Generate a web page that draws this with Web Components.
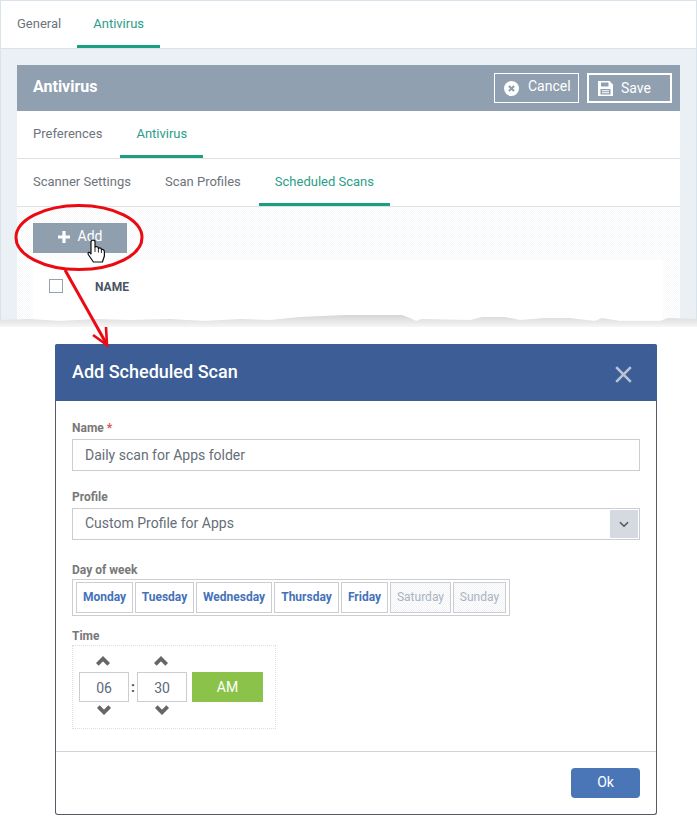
<!DOCTYPE html>
<html>
<head>
<meta charset="utf-8">
<title>Add Scheduled Scan</title>
<style>
  html, body { margin: 0; background: #fff; }
  body { position: relative; width: 697px; height: 817px; overflow: hidden; font-family: Roboto, "Liberation Sans", sans-serif; }
</style>
</head>
<body>
  <app-frame>
    <tab-bar>
      <tab-item>General</tab-item>
      <tab-item active>Antivirus</tab-item>
    </tab-bar>
    <settings-panel title="Antivirus">
      <tab-bar slot="tabs" gap="2">
        <tab-item>Preferences</tab-item>
        <tab-item active>Antivirus</tab-item>
      </tab-bar>
      <tab-bar slot="tabs" gap="2">
        <tab-item>Scanner Settings</tab-item>
        <tab-item>Scan Profiles</tab-item>
        <tab-item active>Scheduled Scans</tab-item>
      </tab-bar>
      <scan-table></scan-table>
    </settings-panel>
  </app-frame>
  <torn-edge></torn-edge>
  <modal-dialog title="Add Scheduled Scan">
    <form-field label="Name" required>
      <text-box value="Daily scan for Apps folder"></text-box>
    </form-field>
    <form-field label="Profile" style="margin-top:18px">
      <text-box value="Custom Profile for Apps" select></text-box>
    </form-field>
    <form-field label="Day of week" gap="3" style="margin-top:22px">
      <day-picker>
        <day-button style="width:57px">Monday</day-button>
        <day-button style="width:59px">Tuesday</day-button>
        <day-button style="width:76px">Wednesday</day-button>
        <day-button style="width:65px">Thursday</day-button>
        <day-button style="width:47px">Friday</day-button>
        <day-button style="width:61px" disabled>Saturday</day-button>
        <day-button style="width:53px" disabled>Sunday</day-button>
      </day-picker>
    </form-field>
    <form-field label="Time" gap="3" style="margin-top:12px">
      <time-picker hours="06" minutes="30" period="AM"></time-picker>
    </form-field>
  </modal-dialog>
  <call-out></call-out>

<script>
  var CANCEL_ICON = '<svg width="15" height="15" viewBox="0 0 15 15"><circle cx="7.5" cy="7.5" r="7.5" fill="#fff"/><path d="M4.9 4.9l5.2 5.2M10.1 4.9l-5.2 5.2" stroke="#90a0b0" stroke-width="2.1"/></svg>';
  var SAVE_ICON = '<svg width="15" height="15" viewBox="0 0 15 15"><path fill="#fff" fill-rule="evenodd" d="M0 0h11.5L15 3.5V15H0zM3 1.5V5.5H10.5V1.5zM2.5 8V13.5H12.5V8zM4 9.3H11V10.3H4zM4 11.2H11V12.2H4z"/></svg>';
  var CHEVRON_UP = '<svg width="14" height="10" viewBox="0 0 14 10"><path d="M1.3 8.4L7 2.7 12.7 8.4" fill="none" stroke="#666" stroke-width="3.8"/></svg>';
  var CHEVRON_DOWN = '<svg width="14" height="10" viewBox="0 0 14 10"><path d="M1.3 1.6L7 7.3 12.7 1.6" fill="none" stroke="#666" stroke-width="3.8"/></svg>';

  class AppFrame extends HTMLElement {
    constructor() {
      super();
      this.attachShadow({ mode: 'open' }).innerHTML = `
<style>
  :host { display: flex; flex-direction: column; height: 321px; box-sizing: border-box; overflow: hidden;
    border: 1px solid #dbe3ea; border-bottom: 0; background: #ebf0f4; }
</style>
<slot></slot>`;
    }
  }

  class TabBar extends HTMLElement {
    constructor() {
      super();
      var gap = this.getAttribute('gap') || 0;
      this.attachShadow({ mode: 'open' }).innerHTML = `
<style>
  :host { display: flex; gap: ${gap}px; height: 48px; box-sizing: border-box; flex: none;
    background: #fff; border-bottom: 1px solid #dde2e8; }
</style>
<slot></slot>`;
    }
  }

  class TabItem extends HTMLElement {
    constructor() {
      super();
      this.attachShadow({ mode: 'open' }).innerHTML = `
<style>
  :host { display: block; height: 47px; box-sizing: border-box; padding: 0 16px; border-bottom: 3px solid transparent;
    font: 13px/46px Roboto, sans-serif; color: #6d747c; white-space: nowrap; }
  :host([active]) { color: #2b9e87; border-bottom-color: #1c9e81; }
</style>
<slot></slot>`;
    }
  }

  class SettingsPanel extends HTMLElement {
    constructor() {
      super();
      var title = this.getAttribute('title');
      this.removeAttribute('title');
      this.attachShadow({ mode: 'open' }).innerHTML = `
<style>
  :host { display: flex; flex-direction: column; flex: 1; margin: 16px 16px 0; background: #fff; }
  .head { display: flex; align-items: center; justify-content: space-between; height: 46px; flex: none;
    padding: 0 8px 0 16px; background: #90a0b0; color: #fff; }
  h2 { margin: -4px 0 0; font: 700 16px Roboto, sans-serif; }
  .actions { display: flex; gap: 8px; }
</style>
<div class="head">
  <h2>${title}</h2>
  <div class="actions">
    <head-button icon="cancel">Cancel</head-button>
    <head-button icon="save">Save</head-button>
  </div>
</div>
<slot name="tabs"></slot>
<slot></slot>`;
    }
  }

  class HeadButton extends HTMLElement {
    constructor() {
      super();
      var save = this.getAttribute('icon') === 'save';
      this.attachShadow({ mode: 'open' }).innerHTML = `
<style>
  :host { display: flex; align-items: center; width: 85px; height: 30px; box-sizing: border-box;
    border: ${save ? 2 : 1}px solid #fff; padding-left: 9px; gap: ${save ? 8 : 9}px;
    font: 14px Roboto, sans-serif; color: #fff; }
  svg { display: block; flex: none; margin-top: 1px; }
  span { position: relative; top: ${save ? 0 : -2}px; }
</style>
${save ? SAVE_ICON : CANCEL_ICON}<span><slot></slot></span>`;
    }
  }

  class ScanTable extends HTMLElement {
    constructor() {
      super();
      this.attachShadow({ mode: 'open' }).innerHTML = `
<style>
  :host { display: block; flex: 1; padding: 16px 17px 0 16px;
    background: conic-gradient(#f7f8f9 25%, #fff 0 50%, #f7f8f9 0 75%, #fff 0) 0 0 / 2px 2px; }
  .add { display: flex; align-items: center; justify-content: center; gap: 8px; width: 94px; height: 30px;
    background: #8f9fae; color: #fff; font: 14px Roboto, sans-serif; }
  .add svg { display: block; margin-top: -2px; }
  .add span { margin-top: -4px; }
  .head { display: flex; align-items: center; height: 60px; margin-top: 7px; padding-left: 16px; background: #fff; }
  .check { width: 14px; height: 14px; border: 1px solid #97a1ad; box-sizing: border-box; margin-top: -8px; }
  .name { margin: -6px 0 0 32px; font: 700 12px Roboto, sans-serif; color: #4a5464; }
</style>
<div class="add">
  <svg width="12" height="12" viewBox="0 0 12 12"><path d="M4.4 0h3.2v4.4H12v3.2H7.6V12H4.4V7.6H0V4.4h4.4z" fill="#fff"/></svg>
  <span>Add</span>
</div>
<div class="head"><div class="check"></div><div class="name">NAME</div></div>`;
    }
  }

  class TornEdge extends HTMLElement {
    constructor() {
      super();
      var jag = '0,6 30,5 60,7 95,5 130,6 170,5 205,7 240,5 270,6 300,3 345,1 402,1 410,4 416,7 422,5 470,6 482,3 505,3 520,6 545,4 570,4 595,7 602,4 620,7 660,7 668,4 697,5';
      this.attachShadow({ mode: 'open' }).innerHTML = `
<style>
  :host { display: block; position: relative; height: 30px; margin-top: -7px; }
  svg { display: block; }
</style>
<svg width="697" height="30" viewBox="0 0 697 30">
  <defs><linearGradient id="fade" x1="0" y1="0" x2="0" y2="1">
    <stop offset="0" stop-color="#d6d6d6"/><stop offset="1" stop-color="#f6f6f6"/>
  </linearGradient></defs>
  <polygon fill="url(#fade)" points="${jag} 697,13 0,13"/>
  <rect y="13" width="697" height="17" fill="#fff"/>
</svg>`;
    }
  }

  class ModalDialog extends HTMLElement {
    constructor() {
      super();
      var title = this.getAttribute('title');
      this.removeAttribute('title');
      this.attachShadow({ mode: 'open' }).innerHTML = `
<style>
  :host { display: block; width: 602px; height: 471px; box-sizing: border-box; margin-left: 55px;
    border: 1px solid #555b63; border-top: 0; border-radius: 3px; background: #fff; }
  header { display: flex; align-items: center; justify-content: space-between; height: 57px; margin: 0 -1px;
    padding: 0 25px 0 17px; background: #3c5d95; border-radius: 2px 2px 0 0; color: #fff; }
  h3 { margin: -2px 0 0; font: 500 18px Roboto, sans-serif; }
  header svg { display: block; margin-top: 4px; }
  .body { padding: 19px 16px 0; height: 351px; box-sizing: border-box; border-bottom: 1px solid #cfd2d6; }
  footer { display: flex; justify-content: flex-end; padding: 16px; }
  .ok { width: 69px; height: 30px; text-align: center; background: #4a76b8; color: #fff;
    border-radius: 4px; font: 14px/28px Roboto, sans-serif; }
</style>
<header>
  <h3>${title}</h3>
  <svg width="17" height="17" viewBox="0 0 17 17"><path d="M1.2 1.2l14.6 14.6M15.8 1.2L1.2 15.8" stroke="#b9c4d6" stroke-width="2.6"/></svg>
</header>
<div class="body"><slot></slot></div>
<footer><div class="ok">Ok</div></footer>`;
    }
  }

  class FormField extends HTMLElement {
    constructor() {
      super();
      var gap = this.getAttribute('gap') || 5;
      var star = this.hasAttribute('required') ? ' <i>*</i>' : '';
      this.attachShadow({ mode: 'open' }).innerHTML = `
<style>
  :host { display: block; }
  label { display: block; height: 14px; margin-bottom: ${gap}px; font: 700 12px/16px Roboto, sans-serif; color: #787878; }
  i { font-style: normal; color: #d9534f; }
</style>
<label>${this.getAttribute('label')}${star}</label>
<slot></slot>`;
    }
  }

  class TextBox extends HTMLElement {
    constructor() {
      super();
      var select = this.hasAttribute('select');
      var arrow = select
        ? '<div class="arrow"><svg width="10" height="7" viewBox="0 0 10 7"><path d="M1 1.2L5 5.2 9 1.2" fill="none" stroke="#555" stroke-width="1.6"/></svg></div>'
        : '';
      this.attachShadow({ mode: 'open' }).innerHTML = `
<style>
  :host { display: flex; align-items: center; height: 32px; box-sizing: border-box; padding: 0 0 ${select ? 2 : 0}px 12px;
    border: 1px solid #cbcdd0; font: 14px Roboto, sans-serif; color: #666e78; position: relative; }
  .arrow { position: absolute; right: 1px; top: 1px; bottom: 1px; width: 28px; background: #d5d9e0;
    display: flex; align-items: center; justify-content: center; }
</style>
<span>${this.getAttribute('value')}</span>${arrow}`;
    }
  }

  class DayPicker extends HTMLElement {
    constructor() {
      super();
      this.attachShadow({ mode: 'open' }).innerHTML = `
<style>
  :host { display: inline-flex; gap: 2px; padding: 2px 3px; border: 1px solid #cbcdd0; vertical-align: top; }
</style>
<slot></slot>`;
    }
  }

  class DayButton extends HTMLElement {
    constructor() {
      super();
      this.attachShadow({ mode: 'open' }).innerHTML = `
<style>
  :host { display: block; height: 31px; box-sizing: border-box; text-align: center; border: 1px solid #cbcdd0;
    font: 700 12px/29px Roboto, sans-serif; color: #4472ba; white-space: nowrap; }
  :host([disabled]) { font-weight: 400; color: #aab3c2;
    background: conic-gradient(#f0f2f5 25%, #fff 0 50%, #f0f2f5 0 75%, #fff 0) 0 0 / 2px 2px; }
</style>
<slot></slot>`;
    }
  }

  class TimePicker extends HTMLElement {
    constructor() {
      super();
      function column(v) {
        return `<div class="col"><div class="step up">${CHEVRON_UP}</div><div class="num">${v}</div><div class="step down">${CHEVRON_DOWN}</div></div>`;
      }
      this.attachShadow({ mode: 'open' }).innerHTML = `
<style>
  :host { display: flex; align-items: center; width: 204px; height: 84px; box-sizing: border-box; padding-left: 6px;
    border: 1px dotted #dcdee0; font: 14px Roboto, sans-serif; }
  .col { width: 50px; }
  .step { display: flex; justify-content: center; height: 26px; box-sizing: border-box; }
  .step svg { display: block; }
  .up { align-items: flex-end; padding: 0 2px 6px 0; }
  .down { align-items: flex-start; padding-top: 3px; }
  .num { height: 30px; box-sizing: border-box; border: 1px solid #cbcdd0; text-align: center; line-height: 30px; color: #5d6b7c; }
  .colon { width: 8px; text-align: center; font-weight: 700; color: #555; }
  .period { width: 71px; height: 30px; margin-left: 5px; background: #8bc34a; color: #fff; text-align: center; line-height: 30px; }
</style>
${column(this.getAttribute('hours'))}<div class="colon">:</div>${column(this.getAttribute('minutes'))}
<div class="period">${this.getAttribute('period')}</div>`;
    }
  }

  // red ellipse, arrow and hand pointer drawn over the screenshot
  class CallOut extends HTMLElement {
    constructor() {
      super();
      this.attachShadow({ mode: 'open' }).innerHTML = `
<style>
  :host { position: absolute; left: 0; top: 0; pointer-events: none; }
  svg { display: block; }
</style>
<svg width="697" height="817" viewBox="0 0 697 817" fill="none">
  <ellipse cx="79" cy="237.5" rx="63" ry="32" stroke="#ec0a12" stroke-width="3"/>
  <path d="M65 270L106 343" stroke="#ec0a12" stroke-width="3"/>
  <path d="M93 335L107 345 106 327" stroke="#ec0a12" stroke-width="2.6"/>
  <path fill="#fff" stroke="#111" stroke-width="1.2" stroke-linejoin="round"
    d="M91 242C91 239.6 95 239.6 95 242V247C97 246 98.4 247 98.4 248.4C100 247.4 101.4 248.2 101.4 249.6C103 249 104.4 250 104.4 252V256L102.4 262H93.4L88.6 255C87 252.4 89.4 251 91 254Z"/>
  <path d="M95 247V252M98.4 248.4V252.6M101.4 249.6V253" stroke="#111" stroke-width=".9"/>
</svg>`;
    }
  }

  customElements.define('app-frame', AppFrame);
  customElements.define('tab-bar', TabBar);
  customElements.define('tab-item', TabItem);
  customElements.define('settings-panel', SettingsPanel);
  customElements.define('head-button', HeadButton);
  customElements.define('scan-table', ScanTable);
  customElements.define('torn-edge', TornEdge);
  customElements.define('modal-dialog', ModalDialog);
  customElements.define('form-field', FormField);
  customElements.define('text-box', TextBox);
  customElements.define('day-picker', DayPicker);
  customElements.define('day-button', DayButton);
  customElements.define('time-picker', TimePicker);
  customElements.define('call-out', CallOut);
</script>
</body>
</html>
